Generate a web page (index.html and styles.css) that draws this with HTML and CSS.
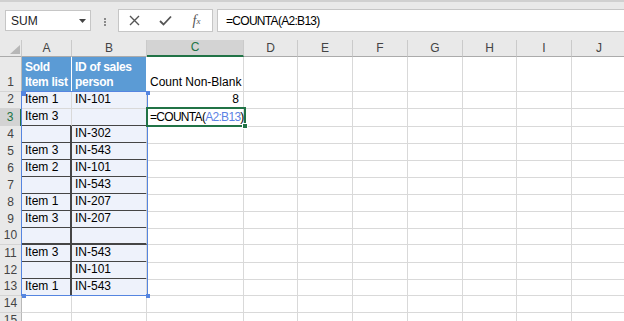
FILE: index.html
```html
<!DOCTYPE html>
<html lang="en">
<head>
    <meta charset="UTF-8">
    <title>COUNTA</title>
    <link rel="stylesheet" href="styles.css">
</head>
<body>

<!-- Formula bar -->
<div class="toolbar">
    <div class="namebox">
        <span>SUM</span>
        <svg width="7" height="4" viewBox="0 0 7 4"><polygon points="0,0 7,0 3.5,4" fill="#444"/></svg>
    </div>
    <div class="grip"><i></i><i></i><i></i></div>
    <div class="fxbox">
        <span class="btn">
            <svg width="11" height="11" viewBox="0 0 11 11"><path d="M1 1 L10 10 M10 1 L1 10" stroke="#555" stroke-width="1.4" fill="none"/></svg>
        </span>
        <span class="btn">
            <svg width="13" height="11" viewBox="0 0 13 11"><path d="M1 6 L4.5 9.5 L12 1.5" stroke="#555" stroke-width="1.8" fill="none"/></svg>
        </span>
        <span class="btn fx">f<sub>x</sub></span>
    </div>
    <div class="formula"><span class="tight">=COUNTA(A2:B13)</span></div>
</div>

<!-- Sheet -->
<div class="sheet">
    <div class="row head">
        <div class="c corner"><svg width="10" height="9" viewBox="0 0 10 9"><polygon points="10,0 10,9 0,9" fill="#b7b7b7"/></svg></div>
        <div class="c">A</div><div class="c">B</div><div class="c sel-col">C</div><div class="c">D</div><div class="c">E</div>
        <div class="c">F</div><div class="c">G</div><div class="c">H</div><div class="c">I</div><div class="c">J</div>
    </div>
    <div class="row tall">
        <div class="c rh">1</div>
        <div class="c title">Sold<br>Item list</div>
        <div class="c title">ID of sales<br>person</div>
        <div class="c">Count Non-Blank</div>
        <div class="c"></div><div class="c"></div><div class="c"></div><div class="c"></div><div class="c"></div><div class="c"></div><div class="c"></div>
    </div>
    <div class="row">
        <div class="c rh">2</div>
        <div class="c t">Item 1</div><div class="c t">IN-101</div><div class="c num">8</div>
        <div class="c"></div><div class="c"></div><div class="c"></div><div class="c"></div><div class="c"></div><div class="c"></div><div class="c"></div>
    </div>
    <div class="row">
        <div class="c rh sel-row">3</div>
        <div class="c t dk-b">Item 3</div><div class="c t dk-b"></div>
        <div class="c"><span class="tight">=COUNTA(<span class="ref">A2:B13</span>)</span></div>
        <div class="c"></div><div class="c"></div><div class="c"></div><div class="c"></div><div class="c"></div><div class="c"></div><div class="c"></div>
    </div>
    <div class="row">
        <div class="c rh">4</div>
        <div class="c t dk-b dk-r"></div><div class="c t dk-b">IN-302</div><div class="c"></div>
        <div class="c"></div><div class="c"></div><div class="c"></div><div class="c"></div><div class="c"></div><div class="c"></div><div class="c"></div>
    </div>
    <div class="row">
        <div class="c rh">5</div>
        <div class="c t dk-b dk-r">Item 3</div><div class="c t dk-b">IN-543</div><div class="c"></div>
        <div class="c"></div><div class="c"></div><div class="c"></div><div class="c"></div><div class="c"></div><div class="c"></div><div class="c"></div>
    </div>
    <div class="row">
        <div class="c rh">6</div>
        <div class="c t dk-b dk-r">Item 2</div><div class="c t dk-b">IN-101</div><div class="c"></div>
        <div class="c"></div><div class="c"></div><div class="c"></div><div class="c"></div><div class="c"></div><div class="c"></div><div class="c"></div>
    </div>
    <div class="row">
        <div class="c rh">7</div>
        <div class="c t dk-b dk-r"></div><div class="c t dk-b">IN-543</div><div class="c"></div>
        <div class="c"></div><div class="c"></div><div class="c"></div><div class="c"></div><div class="c"></div><div class="c"></div><div class="c"></div>
    </div>
    <div class="row">
        <div class="c rh">8</div>
        <div class="c t dk-b dk-r">Item 1</div><div class="c t dk-b">IN-207</div><div class="c"></div>
        <div class="c"></div><div class="c"></div><div class="c"></div><div class="c"></div><div class="c"></div><div class="c"></div><div class="c"></div>
    </div>
    <div class="row">
        <div class="c rh">9</div>
        <div class="c t dk-b dk-r">Item 3</div><div class="c t dk-b">IN-207</div><div class="c"></div>
        <div class="c"></div><div class="c"></div><div class="c"></div><div class="c"></div><div class="c"></div><div class="c"></div><div class="c"></div>
    </div>
    <div class="row">
        <div class="c rh">10</div>
        <div class="c t dk-b dk-r"></div><div class="c t dk-b"></div><div class="c"></div>
        <div class="c"></div><div class="c"></div><div class="c"></div><div class="c"></div><div class="c"></div><div class="c"></div><div class="c"></div>
    </div>
    <div class="row">
        <div class="c rh">11</div>
        <div class="c t dk-b dk-r">Item 3</div><div class="c t dk-b">IN-543</div><div class="c"></div>
        <div class="c"></div><div class="c"></div><div class="c"></div><div class="c"></div><div class="c"></div><div class="c"></div><div class="c"></div>
    </div>
    <div class="row">
        <div class="c rh">12</div>
        <div class="c t dk-b dk-r"></div><div class="c t dk-b">IN-101</div><div class="c"></div>
        <div class="c"></div><div class="c"></div><div class="c"></div><div class="c"></div><div class="c"></div><div class="c"></div><div class="c"></div>
    </div>
    <div class="row">
        <div class="c rh">13</div>
        <div class="c t dk-r">Item 1</div><div class="c t">IN-543</div><div class="c"></div>
        <div class="c"></div><div class="c"></div><div class="c"></div><div class="c"></div><div class="c"></div><div class="c"></div><div class="c"></div>
    </div>
    <div class="row">
        <div class="c rh">14</div>
        <div class="c"></div><div class="c"></div><div class="c"></div>
        <div class="c"></div><div class="c"></div><div class="c"></div><div class="c"></div><div class="c"></div><div class="c"></div><div class="c"></div>
    </div>
    <div class="row">
        <div class="c rh">15</div>
        <div class="c"></div><div class="c"></div><div class="c"></div>
        <div class="c"></div><div class="c"></div><div class="c"></div><div class="c"></div><div class="c"></div><div class="c"></div><div class="c"></div>
    </div>

    <!-- formula reference highlight A2:B13 -->
    <div class="ref-range">
        <i class="h tl"></i><i class="h tr"></i><i class="h bl"></i><i class="h br"></i>
    </div>

    <!-- active cell C3 -->
    <div class="active"><i class="fill-handle"></i></div>
</div>

</body>
</html>
```

FILE: styles.css
```css
* {
    box-sizing: border-box;
}
body {
    margin: 0;
    width: 624px;
    height: 321px;
    overflow: hidden;
    font-family: "Liberation Sans", Arial, sans-serif;
    font-size: 12px;
    color: #000;
    background-color: #fff;
}

/* formula bar */
.toolbar {
    height: 40px;
    display: flex;
    align-items: flex-start;
    padding-top: 7px;
    background-color: #e9e9e9;
    border-top: 2px solid #d0d0d0;
}
.namebox {
    margin: 1px 0 0 5px;
    width: 86px;
    height: 21px;
    display: flex;
    align-items: center;
    justify-content: space-between;
    padding: 0 4px 0 5px;
    background-color: #fff;
    border: 1px solid #c6c6c6;
    color: #222;
}
.grip {
    margin: 9px 0 0 13px;
    width: 2px;
    display: flex;
    flex-direction: column;
    gap: 1px;
}
.grip i {
    width: 2px;
    height: 2px;
    background-color: #8a8a8a;
}
.fxbox {
    margin-left: 12px;
    width: 95px;
    height: 23px;
    display: flex;
    background-color: #fff;
    border: 1px solid #c6c6c6;
}
.fxbox .btn {
    width: 31px;
    display: flex;
    align-items: center;
    justify-content: center;
}
.fx {
    font-family: "Liberation Serif", serif;
    font-style: italic;
    font-size: 14px;
    color: #555;
}
.fx sub {
    font-size: 9px;
    vertical-align: -2px;
}
.formula {
    margin-left: 4px;
    flex: 1;
    height: 23px;
    display: flex;
    align-items: center;
    padding-left: 8px;
    background-color: #fff;
    border: 1px solid #c6c6c6;
    border-right: none;
}
.tight {
    letter-spacing: -0.7px;
}

/* grid */
.sheet {
    position: relative;
}
.row {
    display: grid;
    grid-template-columns: 22px 50px 75px 97px 54px 55px 55px 55px 54px 55px 55px;
    height: 17px;
}
.row.tall {
    height: 35px;
}
.c {
    display: flex;
    align-items: flex-end;
    padding: 0 2px 1px 3px;
    line-height: 15px;
    white-space: nowrap;
    border-right: 1px solid #d9d9d9;
    border-bottom: 1px solid #d9d9d9;
}
.head .c {
    align-items: center;
    justify-content: center;
    padding: 0;
    background-color: #e9e9e9;
    color: #444;
    border-right-color: #cacaca;
    border-bottom-color: #ababab;
}
.head .corner {
    align-items: flex-end;
    justify-content: flex-end;
    padding: 0 1px 2px 0;
}
.rh {
    justify-content: center;
    padding: 0 0 1px 0;
    background-color: #e9e9e9;
    color: #444;
    border-right-color: #b9b9b9;
    border-bottom-color: #d4d4d4;
}
.head .sel-col {
    background-color: #d3d3d3;
    color: #217346;
    border-bottom: 2px solid #217346;
}
.sel-row {
    background-color: #d3d3d3;
    color: #217346;
    border-right: 2px solid #217346;
}
.title {
    background-color: #5b9bd5;
    color: #fff;
    font-weight: bold;
    letter-spacing: -0.3px;
    border-right-color: #fff;
}
.t {
    background-color: #eef2fb;
}
.dk-b {
    border-bottom: 2px solid #454545;
}
.dk-r {
    border-right: 2px solid #454545;
}
.num {
    justify-content: flex-end;
    padding-right: 4px;
}
.ref {
    color: #5b82e4;
}

/* overlays */
.ref-range {
    position: absolute;
    left: 21px;
    top: 51px;
    width: 127px;
    height: 205px;
    border: 1px solid #5585e0;
}
.ref-range .h {
    position: absolute;
    width: 4px;
    height: 4px;
    background-color: #5585e0;
}
.h.tl { left: 0; top: 0; }
.h.tr { right: -3px; top: -1px; }
.h.bl { left: 0; bottom: -3px; }
.h.br { right: -3px; bottom: -3px; }
.active {
    position: absolute;
    left: 146px;
    top: 67px;
    width: 100px;
    height: 20px;
    border: 2px solid #217346;
}
.fill-handle {
    position: absolute;
    right: -4px;
    bottom: -4px;
    width: 6px;
    height: 6px;
    background-color: #217346;
    border: 1px solid #fff;
}
```
